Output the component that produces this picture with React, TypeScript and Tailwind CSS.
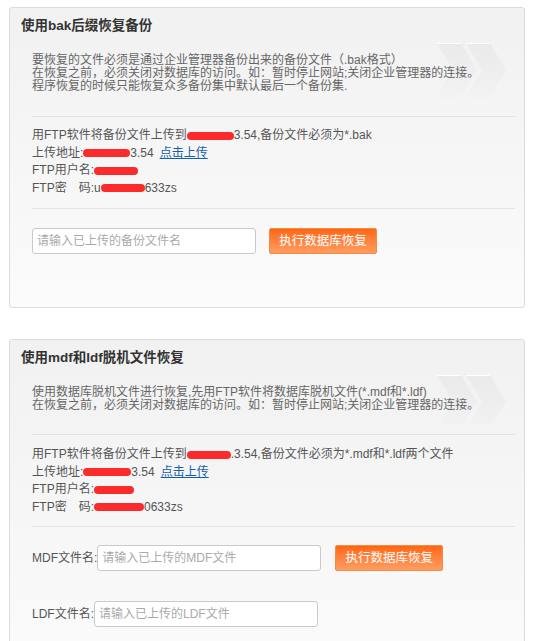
import React from "react";

interface ChevronsProps {
    id: string;
}

// faint ">>" watermark behind the notice text
const Chevrons: React.FC<ChevronsProps> = ({ id }) => (
    <svg width="70" height="54" viewBox="0 0 70 54" className="absolute left-[405px] top-0">
        <defs>
            <linearGradient id={id} x1="0" y1="0" x2="0" y2="1">
                <stop offset="0" stopColor="#eaeaea" />
                <stop offset="1" stopColor="#f2f2f2" />
            </linearGradient>
        </defs>
        <polygon points="0,0 24,0 40,27 24,54 0,54 16,27" fill={`url(#${id})`} />
        <polygon points="29,0 53,0 69,27 53,54 29,54 45,27" fill={`url(#${id})`} />
        <polyline points="0,0.5 24,0.5" stroke="#ffffff" strokeWidth="1" />
        <polyline points="29,0.5 53,0.5" stroke="#ffffff" strokeWidth="1" />
    </svg>
);

const Redact: React.FC<{ className: string }> = ({ className }) => (
    <span className={`inline-block h-[8px] rounded-full bg-[#fb2b2b] align-middle ${className}`} />
);

const Divider = () => <div className="h-px bg-[#e3e3e3]" />;

const Panel: React.FC<{ title: string; className?: string; children: React.ReactNode }> = ({ title, className = "", children }) => (
    <div className={`ml-[9px] w-[516px] rounded-[3px] border border-[#dcdcdc] bg-gradient-to-b from-[#f1f1f1] to-[#fbfbfb] ${className}`}>
        <h3 className="h-[35px] pl-[11px] pt-[8px] text-[13.5px] font-bold leading-[20px] text-[#333]">{title}</h3>
        <div className="pl-[22px] pr-[9px]">{children}</div>
    </div>
);

const RestoreButton = () => (
    <button className="h-[26px] w-[108px] rounded-[2px] border border-[#f58a4a] bg-gradient-to-b from-[#ff6608] to-[#ff9d5e] text-[12.5px] text-white">
        执行数据库恢复
    </button>
);

const inputCls =
    "h-[26px] w-[224px] rounded-[3px] border border-[#c9c9c9] bg-white px-[4px] text-[12px] text-[#333] outline-none placeholder:text-[#aaa]";

export default function App() {
    return (
        <div className="min-h-[641px] bg-white pt-[7px] pb-[20px] font-['Liberation_Sans','Noto_Sans_CJK_SC',sans-serif] text-[12px]">
            {/* bak restore */}
            <Panel title="使用bak后缀恢复备份">
                <div className="relative h-[62px] overflow-hidden pt-[11px] leading-[13px] text-[#666]">
                    <Chevrons id="chev1" />
                    <p className="relative">
                        要恢复的文件必须是通过企业管理器备份出来的备份文件（.bak格式）<br />
                        在恢复之前，必须关闭对数据库的访问。如：暂时停止网站;关闭企业管理器的连接。<br />
                        程序恢复的时候只能恢复众多备份集中默认最后一个备份集.
                    </p>
                </div>
                <div className="mt-[11px]">
                    <Divider />
                </div>
                <div className="pt-[10px] pb-[11px] leading-[17.5px] text-[#555]">
                    <p>用FTP软件将备份文件上传到<Redact className="w-[47px]" />3.54,备份文件必须为*.bak</p>
                    <p>
                        上传地址:<Redact className="w-[47px]" />3.54
                        <a href="#" className="ml-[6px] text-[#135eaa] underline">点击上传</a>
                    </p>
                    <p>FTP用户名:<Redact className="w-[44px]" /></p>
                    <p>FTP密　码:u<Redact className="w-[44px]" />633zs</p>
                </div>
                <Divider />
                <div className="flex items-center pt-[19px] pb-[53px]">
                    <input className={inputCls} placeholder="请输入已上传的备份文件名" />
                    <div className="ml-[13px]">
                        <RestoreButton />
                    </div>
                </div>
            </Panel>

            {/* mdf / ldf restore */}
            <Panel title="使用mdf和ldf脱机文件恢复" className="mt-[31px]">
                <div className="relative h-[49px] overflow-hidden pt-[11px] leading-[13px] text-[#666]">
                    <Chevrons id="chev2" />
                    <p className="relative">
                        使用数据库脱机文件进行恢复,先用FTP软件将数据库脱机文件(*.mdf和*.ldf)<br />
                        在恢复之前，必须关闭对数据库的访问。如：暂时停止网站;关闭企业管理器的连接。
                    </p>
                </div>
                <div className="mt-[10px]">
                    <Divider />
                </div>
                <div className="pt-[11px] pb-[10px] leading-[17.5px] text-[#555]">
                    <p>用FTP软件将备份文件上传到<Redact className="w-[44px]" />.3.54,备份文件必须为*.mdf和*.ldf两个文件</p>
                    <p>
                        上传地址:<Redact className="w-[48px]" />3.54
                        <a href="#" className="ml-[6px] text-[#135eaa] underline">点击上传</a>
                    </p>
                    <p>FTP用户名:<Redact className="w-[40px]" /></p>
                    <p>FTP密　码:<Redact className="w-[50px]" />0633zs</p>
                </div>
                <Divider />
                <div className="flex items-center pt-[18px] text-[#555]">
                    <span>MDF文件名:</span>
                    <input className={inputCls} placeholder="请输入已上传的MDF文件" />
                    <div className="ml-[14px]">
                        <RestoreButton />
                    </div>
                </div>
                <div className="flex items-center pt-[30px] pb-[40px] text-[#555]">
                    <span>LDF文件名:</span>
                    <input className={inputCls} placeholder="请输入已上传的LDF文件" />
                </div>
            </Panel>
        </div>
    );
}
